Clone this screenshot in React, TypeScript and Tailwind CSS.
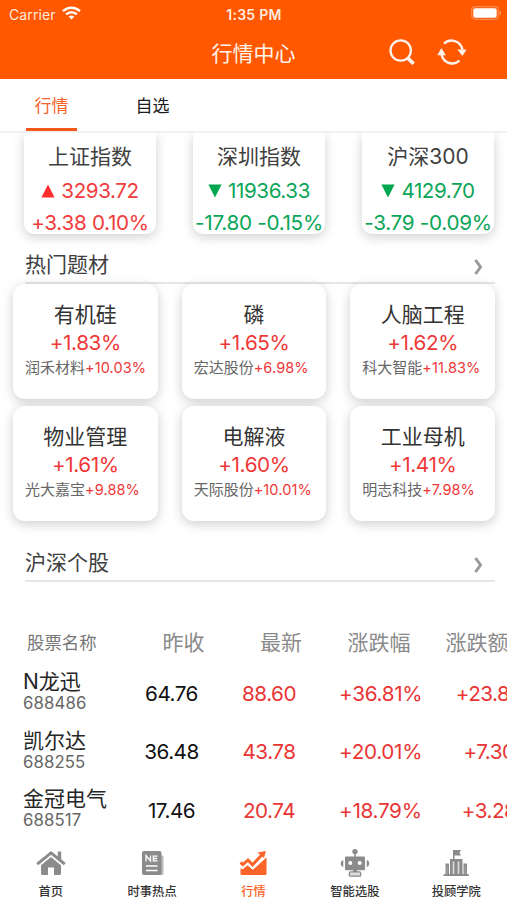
import { clsx } from 'clsx';

interface IndexQuote {
  name: string;
  up: boolean;
  price: string;
  change: string;
}

interface Topic {
  name: string;
  change: string;
  stock: string;
  stockChange: string;
}

interface Stock {
  name: string;
  code: string;
  prev: string;
  last: string;
  percent: string;
  amount: string;
}

const indexes: IndexQuote[] = [
  { name: '上证指数', up: true, price: '3293.72', change: '+3.38 0.10%' },
  { name: '深圳指数', up: false, price: '11936.33', change: '-17.80 -0.15%' },
  { name: '沪深300', up: false, price: '4129.70', change: '-3.79 -0.09%' },
];

const topics: Topic[] = [
  { name: '有机硅', change: '+1.83%', stock: '润禾材料', stockChange: '+10.03%' },
  { name: '磷', change: '+1.65%', stock: '宏达股份', stockChange: '+6.98%' },
  { name: '人脑工程', change: '+1.62%', stock: '科大智能', stockChange: '+11.83%' },
  { name: '物业管理', change: '+1.61%', stock: '光大嘉宝', stockChange: '+9.88%' },
  { name: '电解液', change: '+1.60%', stock: '天际股份', stockChange: '+10.01%' },
  { name: '工业母机', change: '+1.41%', stock: '明志科技', stockChange: '+7.98%' },
];

const stocks: Stock[] = [
  { name: 'N龙迅', code: '688486', prev: '64.76', last: '88.60', percent: '+36.81%', amount: '+23.84' },
  { name: '凯尔达', code: '688255', prev: '36.48', last: '43.78', percent: '+20.01%', amount: '+7.30' },
  { name: '金冠电气', code: '688517', prev: '17.46', last: '20.74', percent: '+18.79%', amount: '+3.28' },
];

function StatusBar() {
  return (
    <div className="grid h-7 grid-cols-3 items-center pr-[5px] pl-[9px] text-[#ffe9dc]">
      <div className="flex items-center gap-1.5">
        <span className="text-[14px] tracking-[0.1px]">Carrier</span>
        <svg className="mb-0.5" width="19" height="14" viewBox="0 0 19 14" fill="none" stroke="white" strokeWidth="2.5">
          <path d="M1 5.2C5.8.5 13.2.5 18 5.2" />
          <path d="M4.1 8.4c3.1-2.9 7.7-2.9 10.8 0" />
          <path d="M6.600 10.600c1.700-1.500 4.100-1.500 5.800 0L9.500 13.600Z" fill="white" stroke="none" />
        </svg>
      </div>
      <div className="pr-[3px] text-center text-[14px] font-semibold tracking-[0.3px]">1:35 PM</div>
      <svg className="mb-0.5 justify-self-end" width="31" height="14" viewBox="0 0 31 14">
        <rect x=".7" y=".7" width="26.600" height="12.600" rx="3.500" fill="none" stroke="#ff8a50" strokeWidth="1.200" />
        <rect x="2.300" y="2.300" width="23.400" height="9.400" rx="2" fill="white" />
        <path d="M28.500 4.500c2.200.8 2.200 4.200 0 5Z" fill="#ff9a66" />
      </svg>
    </div>
  );
}

function NavBar() {
  return (
    <div className="grid h-[51px] grid-cols-[1fr_auto_1fr] items-center px-10 text-white">
      <span />
      <h1 className="text-[21px] leading-[50px] text-[#fff3ec]">行情中心</h1>
      <div className="flex items-center justify-end gap-[22px] pb-1">
        <svg width="26" height="26" viewBox="0 0 26 26" fill="none" stroke="#fff3ec">
          <circle cx="11.700" cy="11.500" r="10.200" strokeWidth="2.300" />
          <path d="M19 19.200 24.600 24.800" strokeWidth="3.700" />
        </svg>
        <svg width="30" height="26" viewBox="0 0 30 26" fill="none" stroke="#fff3ec" strokeWidth="2.400">
          <path d="M7 4.600C12.700-.8 23.600 1.200 25.500 10.500" />
          <path d="M22.500 21.700C16.500 27 6.600 24.600 4.500 15.500" />
          <path d="M20.300 10.500h9.200L25.400 17Z" fill="#fff3ec" stroke="none" />
          <path d="M.3 16.200h8.600L4.400 9Z" fill="#fff3ec" stroke="none" />
        </svg>
      </div>
    </div>
  );
}

function Tabs() {
  return (
    <div className="relative z-10 flex h-[54px] shrink-0 border-b-2 border-[#f1f1f1] bg-white text-[17px] leading-[54px]">
      <button className="ml-[26px] w-[51px] border-b-[3px] border-[#f4581c] text-[#f4622a]">行情</button>
      <button className="ml-[50px] w-[51px] border-b-[3px] border-transparent text-[#1c1c1c]">自选</button>
    </div>
  );
}

function IndexCard({ quote }: { quote: IndexQuote }) {
  return (
    <div
      className={clsx(
        'flex h-[101px] w-[132px] flex-col items-center rounded-b-[10px] bg-white whitespace-nowrap shadow-[0_3px_12px_rgba(0,0,0,0.19)]',
        quote.up ? 'text-[#f03c3c]' : 'text-[#0aa558]'
      )}
    >
      <h3 className="pt-2 text-[21px] leading-8 text-[#404040]">{quote.name}</h3>
      <div className="flex h-8 items-center gap-1.5 pt-1">
        <svg width="14" height="14" viewBox="0 0 14 14" fill={quote.up ? '#ff2d2d' : '#00a650'}>
          {quote.up ? <path d="M7 .5 13.600 13.500H.4Z" /> : <path d="M.4.5h13.200L7 13.500Z" />}
        </svg>
        <span className="text-[20.6px] tracking-[-0.4px]">{quote.price}</span>
      </div>
      <span className="pt-px text-[20.7px] leading-[34px] tracking-[-0.3px]">{quote.change}</span>
    </div>
  );
}

function SectionHeader({ title }: { title: string }) {
  return (
    <div className="mr-3 ml-[25px] flex h-[39px] items-center justify-between border-b-2 border-[#e6e6e6] pr-3">
      <h2 className="pt-0.5 text-[21px] leading-9 text-[#404040]">{title}</h2>
      <svg className="mt-1.5" width="9" height="16" viewBox="0 0 9 16" fill="none" stroke="#999" strokeWidth="3">
        <path d="M1.500 1 6.500 8 1.500 15" />
      </svg>
    </div>
  );
}

function TopicCard({ topic }: { topic: Topic }) {
  return (
    <div className="flex h-[115px] flex-col items-center rounded-[12px] bg-white pt-4 whitespace-nowrap shadow-[0_3px_12px_rgba(0,0,0,0.2)]">
      <h3 className="text-[21px] leading-[30px] text-[#333]">{topic.name}</h3>
      <span className="text-[20.7px] leading-[26px] tracking-[-0.4px] text-[#ee3838]">{topic.change}</span>
      <span className="w-full pl-3 text-[15px] leading-6 text-[#666]">
        {topic.stock}
        <span className="text-[14.5px] tracking-[0.1px] text-[#ee3838]">{topic.stockChange}</span>
      </span>
    </div>
  );
}

function StockTable() {
  return (
    <div className="w-[560px]">
      <div className="grid h-[46px] grid-cols-[123px_97px_98px_98px_98px] items-center pt-1 text-center text-[21px] text-[#8a8a8a]">
        <span className="pl-[27px] text-left text-[17.400px] text-[#777]">股票名称</span>
        <span className="pl-6">昨收</span>
        <span className="pl-6">最新</span>
        <span className="pl-6">涨跌幅</span>
        <span className="pl-6">涨跌额</span>
      </div>
      {stocks.map((stock) => (
        <div
          key={stock.code}
          className="grid h-[58.6px] grid-cols-[123px_97px_98px_98px_140px] items-center text-center text-[20.7px] tracking-[-0.5px] text-[#e93535]"
        >
          <div className="pb-1 pl-[23px] text-left">
            <div className="text-[21px] leading-6 tracking-normal text-[#262626]">{stock.name}</div>
            <div className="text-[16.800px] leading-[18px] tracking-[0.1px] text-[#666]">{stock.code}</div>
          </div>
          <span className="text-[#111]">{stock.prev}</span>
          <span>{stock.last}</span>
          <span className="pl-[21px] tracking-[-0.3px]">{stock.percent}</span>
          <span className="pl-1.5">{stock.amount}</span>
        </div>
      ))}
    </div>
  );
}

const navItems = [
  {
    label: '首页',
    icon: (
      <svg width="30" height="30" viewBox="0 0 30 30" fill="#8b8b8b">
        <path d="M15 3 .3 15l1.900 2.300L15 6.800l12.800 10.500 1.900-2.300-4.500-3.700V3.500h-3.400v5Z" />
        <path d="M15 9 5 17.300V25.500Q5 27 6.500 27H12v-7.500h6V27h5.500q1.500 0 1.500-1.500v-8.200Z" />
      </svg>
    ),
  },
  {
    label: '时事热点',
    icon: (
      <svg width="30" height="30" viewBox="0 0 30 30">
        <rect x="22" y="7.500" width="4.500" height="19.500" rx="1.500" fill="#bcbcbc" />
        <rect x="5" y="3" width="19.500" height="24" rx="2" fill="#8b8b8b" />
        <path d="M9 13.500v-6l4.500 5.500V7.500M16 8.200h4.500M16 10.500h4M16 12.800h4.500M9 18h11.500M9 22.500h11.500" fill="none" stroke="white" strokeWidth="1.300" />
        <path d="M16.300 7.500v6" stroke="white" strokeWidth="1.200" />
      </svg>
    ),
  },
  {
    label: '行情',
    active: true,
    icon: (
      <svg width="30" height="30" viewBox="0 0 30 30" fill="#fb6429">
        <path d="M2.500 20.200l2 1.300 5-4.200 5.300 4.500L28.500 9.500V25.500q0 1.500-1.500 1.500H4q-1.500 0-1.500-1.500Z" />
        <path d="m2.500 14.500 2.500 2 5-4.500 4.500 4.800L23.500 7.300" fill="none" stroke="#fb6429" strokeWidth="3" />
        <path d="m19.500 4.500 8.500-1.500-2 7Z" />
      </svg>
    ),
  },
  {
    label: '智能选股',
    icon: (
      <svg width="30" height="30" viewBox="0 0 30 30" fill="#8b8b8b">
        <circle cx="15" cy="3.600" r="2.700" />
        <path d="M14.200 5h1.600v4h-1.600z" />
        <rect x="5" y="8.500" width="20" height="13.700" rx="1" />
        <path d="M3.300 12.200v6.600C-.1 18.500-.1 12.500 3.300 12.200ZM26.700 12.200v6.600c3.400-.3 3.400-6.300 0-6.600Z" />
        <circle cx="10.300" cy="15" r="2" fill="white" />
        <circle cx="19.700" cy="15" r="2" fill="white" />
        <path d="M13 22h4v2h-4z" />
        <rect x="9.300" y="23.900" width="11.400" height="4.300" rx="1.300" fill="#ddd" stroke="#8b8b8b" strokeWidth="1.300" />
      </svg>
    ),
  },
  {
    label: '投顾学院',
    icon: (
      <svg width="30" height="30" viewBox="0 0 30 30" fill="#8b8b8b">
        <path d="M12 2h1.500v9H12zM13 2h7l-1.500 2.700L20 7.500h-7zM9 11h12.500v16H9zM4.500 15.500H8V27H4.500zM22.500 15.500H26V27h-3.500zM2.500 26.300h25.300V28H2.500z" />
        <path d="M12.500 13.500V26M17.500 13.500V26" stroke="#dedede" strokeWidth="1.600" />
        <path d="M6.200 17.500V26M24.200 17.500V26" stroke="#a5a5a5" strokeWidth=".9" />
      </svg>
    ),
  },
];

function BottomNav() {
  return (
    <nav className="grid h-[62px] shrink-0 grid-cols-5 bg-white">
      {navItems.map((item) => (
        <button key={item.label} className="flex flex-col items-center pt-2.5">
          {item.icon}
          <span
            className={clsx(
              'pt-[3px] text-[12.300px] leading-[22px] font-medium',
              item.active ? 'text-[#fb6429]' : 'text-[#333]'
            )}
          >
            {item.label}
          </span>
        </button>
      ))}
    </nav>
  );
}

export default function App() {
  return (
    <div className="flex h-[900px] w-[507px] flex-col overflow-hidden bg-white font-[Inter,'Noto_Sans_CJK_SC',sans-serif]">
      <header className="h-[79px] shrink-0 bg-[#ff5800]">
        <StatusBar />
        <NavBar />
      </header>
      <Tabs />
      <main className="min-h-0 flex-1 overflow-hidden">
        <div className="flex gap-[37px] pl-6">
          {indexes.map((quote) => (
            <IndexCard key={quote.name} quote={quote} />
          ))}
        </div>
        <div className="pt-[11px]">
          <SectionHeader title="热门题材" />
        </div>
        <div className="grid grid-cols-3 gap-x-6 gap-y-[7px] pr-3 pl-[13px]">
          {topics.map((topic) => (
            <TopicCard key={topic.name} topic={topic} />
          ))}
        </div>
        <div className="pt-[22px]">
          <SectionHeader title="沪深个股" />
        </div>
        <div className="pt-9">
          <StockTable />
        </div>
      </main>
      <BottomNav />
    </div>
  );
}
